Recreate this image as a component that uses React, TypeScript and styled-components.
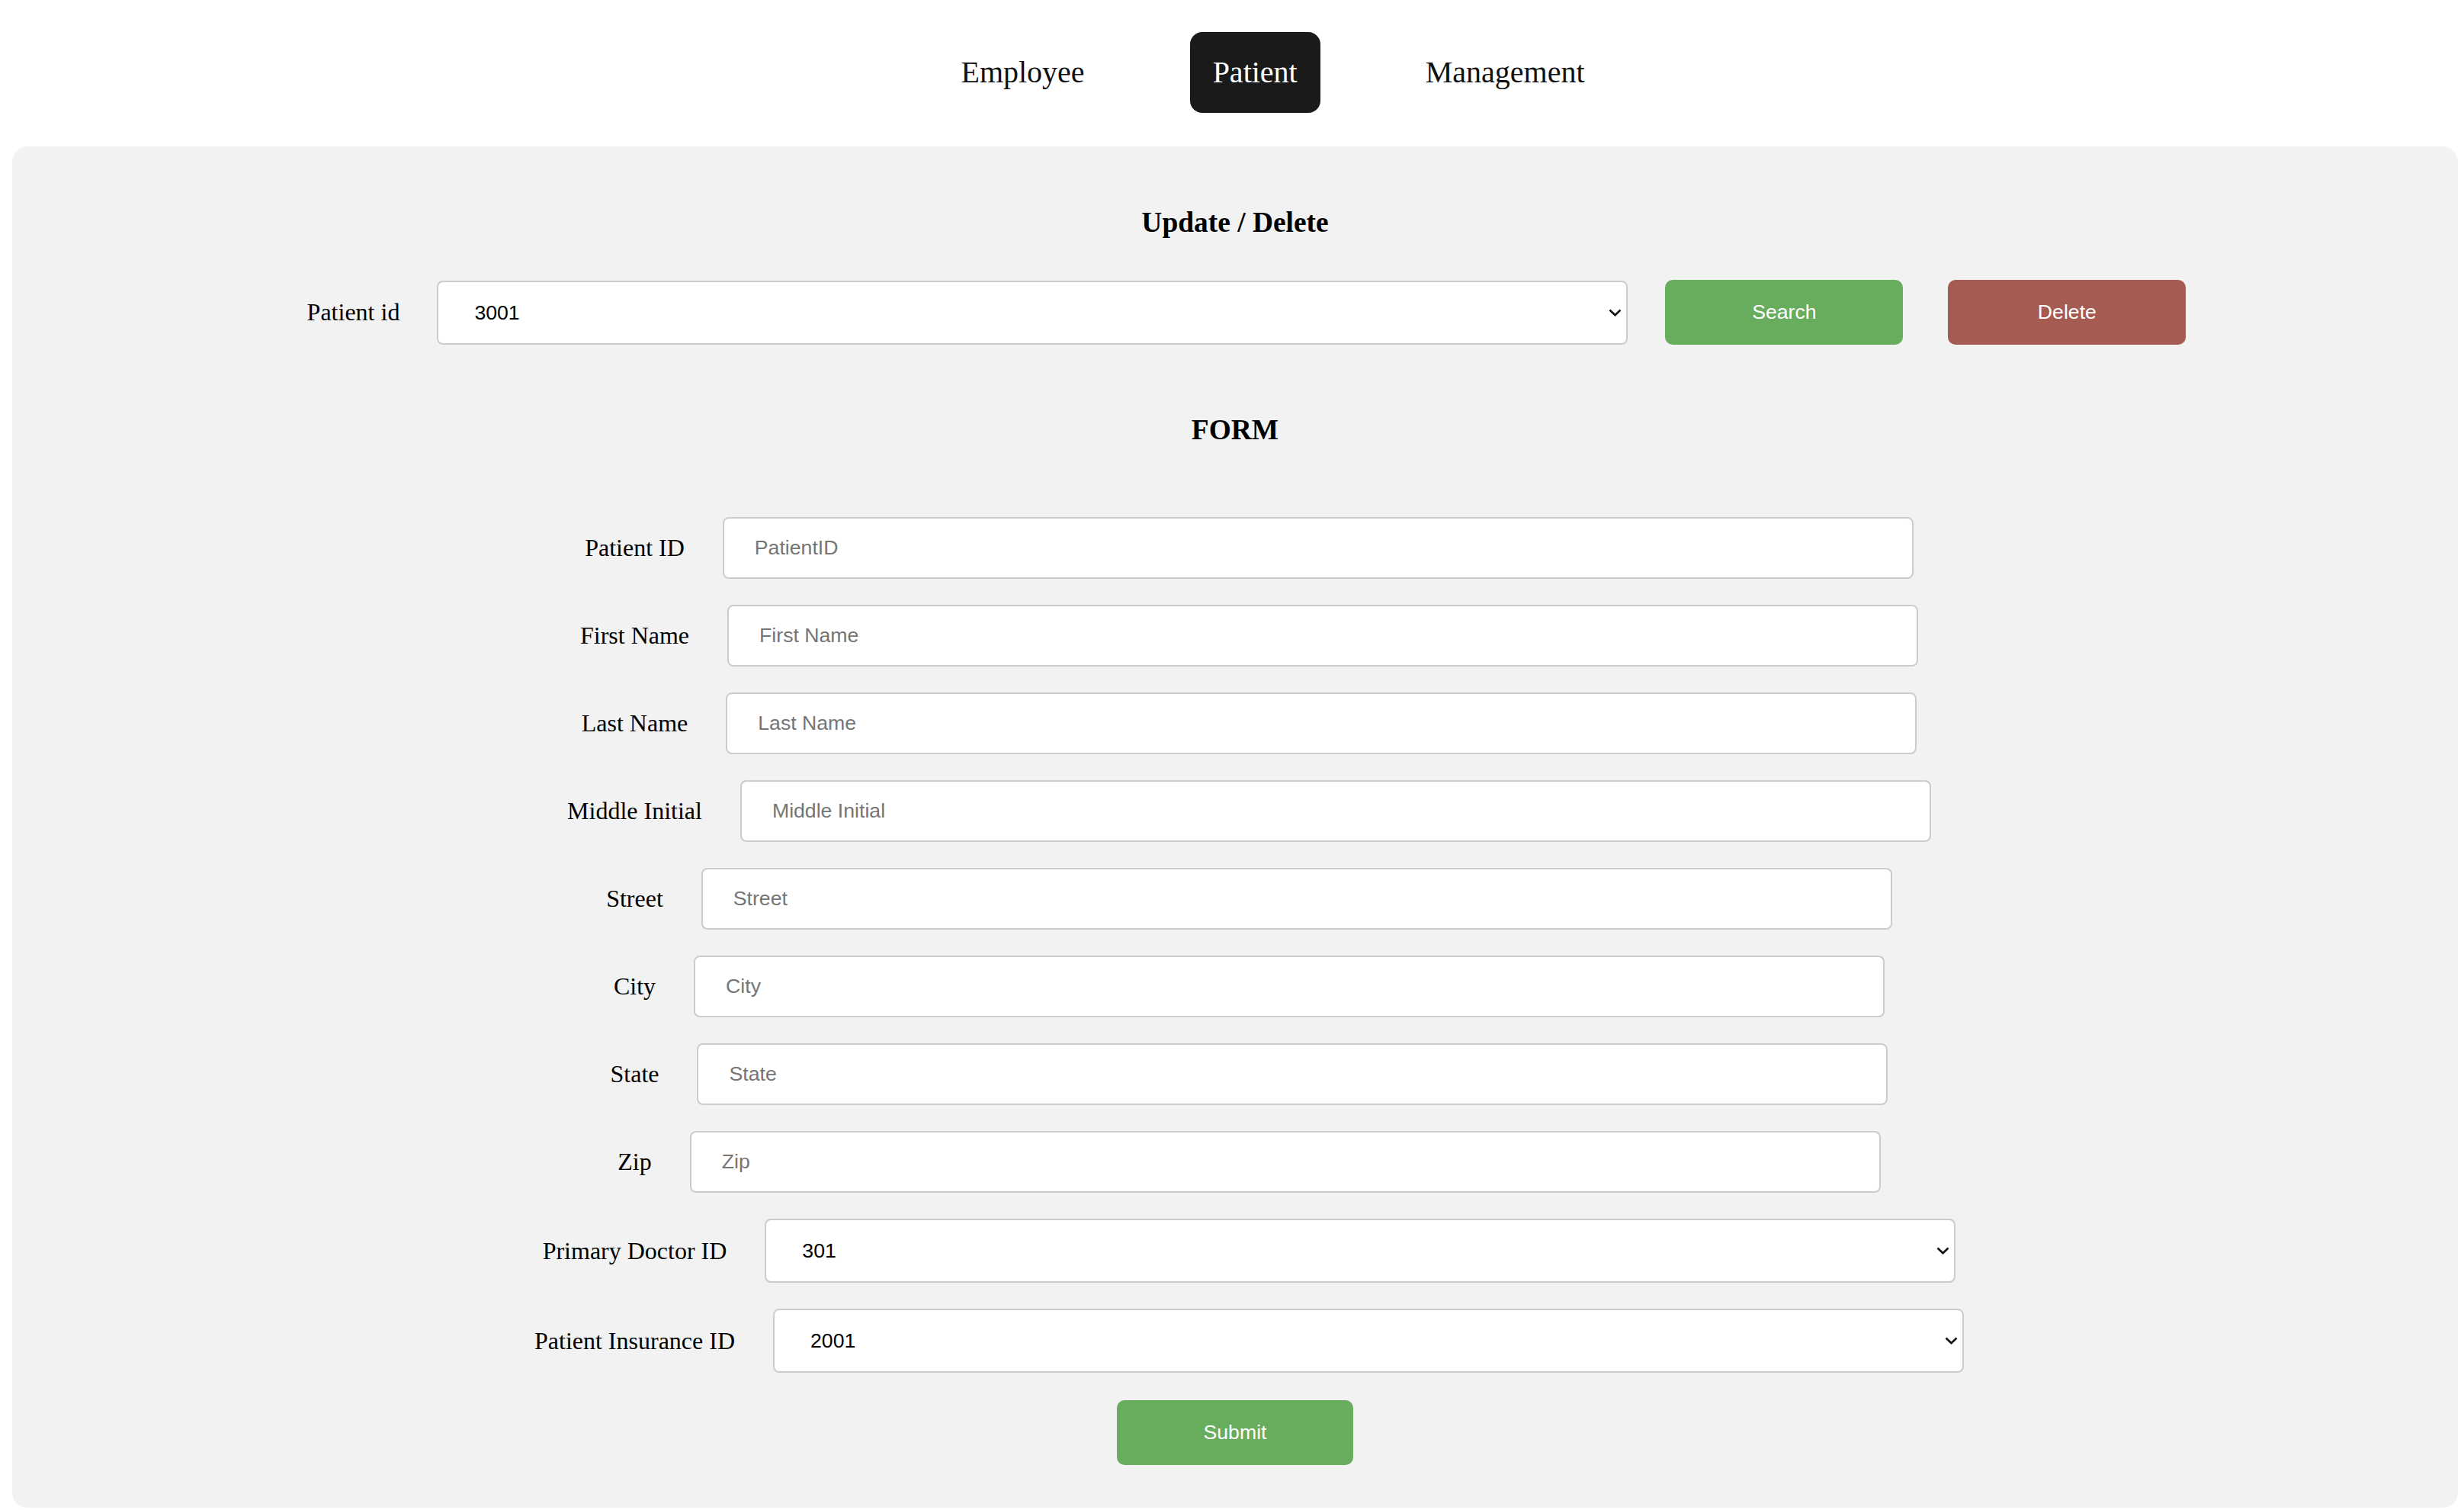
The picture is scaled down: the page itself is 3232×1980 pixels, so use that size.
import styled, { createGlobalStyle } from 'styled-components'

const GlobalStyle = createGlobalStyle`
  body {
    margin: 16px 8px 0 16px;
    background: #ffffff;
    font-family: 'Liberation Serif', 'Times New Roman', serif;
  }
`

const Nav = styled.nav`
  display: flex;
  justify-content: center;
  gap: 108px;
  padding: 26px 0 44px 99px;
`

const NavButton = styled.button<{ $active?: boolean }>`
  all: unset;
  cursor: pointer;
  padding: 30px;
  font-family: 'Liberation Serif', 'Times New Roman', serif;
  font-size: 40px;
  line-height: 46px;
  border-radius: 16px;
  background: ${(p) => (p.$active ? '#1a1a1a' : 'transparent')};
  color: ${(p) => (p.$active ? '#ffffff' : '#111111')};
`

const Panel = styled.main`
  background: #f2f2f2;
  border-radius: 20px;
  padding: 78px 40px 56px;
  display: flex;
  flex-direction: column;
`

const SectionTitle = styled.h3<{ $top?: number }>`
  margin: ${(p) => p.$top ?? 0}px 0 0;
  font-size: 37.44px;
  line-height: 44px;
  font-weight: bold;
  text-align: center;
  color: #000;
`

const SearchRow = styled.div`
  display: flex;
  align-items: center;
  justify-content: center;
  gap: 49px;
  margin-top: 53px;
  padding-left: 30px;
`

const Label = styled.label`
  font-size: 32px;
  line-height: 37px;
  color: #000;
  white-space: nowrap;
`

const Form = styled.form`
  display: flex;
  flex-direction: column;
  gap: 34px;
  margin-top: 92px;
`

const FieldRow = styled.div`
  display: flex;
  align-items: center;
  justify-content: center;
  gap: 50px;
  padding-left: 37px;
`

const TextInput = styled.input`
  box-sizing: border-box;
  width: 1562px;
  height: 81px;
  padding: 0 40px;
  border: 2px solid #cccccc;
  border-radius: 8px;
  background: #ffffff;
  font-family: 'Liberation Sans', Arial, sans-serif;
  font-size: 26.67px;
  color: #000;
  outline: none;

  &::placeholder {
    color: #757575;
  }
`

const SelectBox = styled.div`
  position: relative;
  width: 1562px;
`

const Select = styled.select`
  box-sizing: border-box;
  appearance: none;
  width: 100%;
  height: 84px;
  padding: 0 40px 0 47px;
  border: 2px solid #cccccc;
  border-radius: 8px;
  background: #ffffff;
  font-family: 'Liberation Sans', Arial, sans-serif;
  font-size: 26.67px;
  color: #000;
  outline: none;
`

const Chevron = styled.svg`
  position: absolute;
  right: 8px;
  top: 50%;
  transform: translateY(-50%);
  pointer-events: none;
`

const ActionButton = styled.button<{ $tone: 'green' | 'red' }>`
  box-sizing: border-box;
  width: 312px;
  height: 85px;
  border: none;
  border-radius: 10px;
  background: ${(p) => (p.$tone === 'green' ? '#68ac5e' : '#a55b51')};
  color: #ffffff;
  font-family: 'Liberation Sans', Arial, sans-serif;
  font-size: 26.67px;
  cursor: pointer;
`

const DeleteButton = styled(ActionButton)`
  margin-left: 10px;
`

const SubmitButton = styled(ActionButton)`
  align-self: center;
  width: 310px;
  margin-top: 2px;
`

const textFields = [
  { label: 'Patient ID', placeholder: 'PatientID' },
  { label: 'First Name', placeholder: 'First Name' },
  { label: 'Last Name', placeholder: 'Last Name' },
  { label: 'Middle Initial', placeholder: 'Middle Initial' },
  { label: 'Street', placeholder: 'Street' },
  { label: 'City', placeholder: 'City' },
  { label: 'State', placeholder: 'State' },
  { label: 'Zip', placeholder: 'Zip' },
]

const Dropdown = ({ value, options }: { value: string; options: string[] }) => (
  <SelectBox>
    <Select defaultValue={value}>
      {options.map((o) => (
        <option key={o} value={o}>
          {o}
        </option>
      ))}
    </Select>
    <Chevron width="17" height="10" viewBox="0 0 17 10">
      <polyline points="1.5,1.5 8.5,8.2 15.5,1.5" fill="none" stroke="#111" strokeWidth="2.6" />
    </Chevron>
  </SelectBox>
)

export default function App() {
  return (
    <>
      <GlobalStyle />
      <Nav>
        <NavButton>Employee</NavButton>
        <NavButton $active>Patient</NavButton>
        <NavButton>Management</NavButton>
      </Nav>
      <Panel>
        <SectionTitle>Update / Delete</SectionTitle>
        <SearchRow>
          <Label>Patient id</Label>
          <Dropdown value="3001" options={['3001', '3002', '3003']} />
          <ActionButton $tone="green">Search</ActionButton>
          <DeleteButton $tone="red">Delete</DeleteButton>
        </SearchRow>

        <SectionTitle $top={90}>FORM</SectionTitle>
        <Form onSubmit={(e) => e.preventDefault()}>
          {textFields.map((f) => (
            <FieldRow key={f.label}>
              <Label>{f.label}</Label>
              <TextInput placeholder={f.placeholder} />
            </FieldRow>
          ))}
          <FieldRow>
            <Label>Primary Doctor ID</Label>
            <Dropdown value="301" options={['301', '302', '303']} />
          </FieldRow>
          <FieldRow>
            <Label>Patient Insurance ID</Label>
            <Dropdown value="2001" options={['2001', '2002', '2003']} />
          </FieldRow>
          <SubmitButton type="submit" $tone="green">
            Submit
          </SubmitButton>
        </Form>
      </Panel>
    </>
  )
}
